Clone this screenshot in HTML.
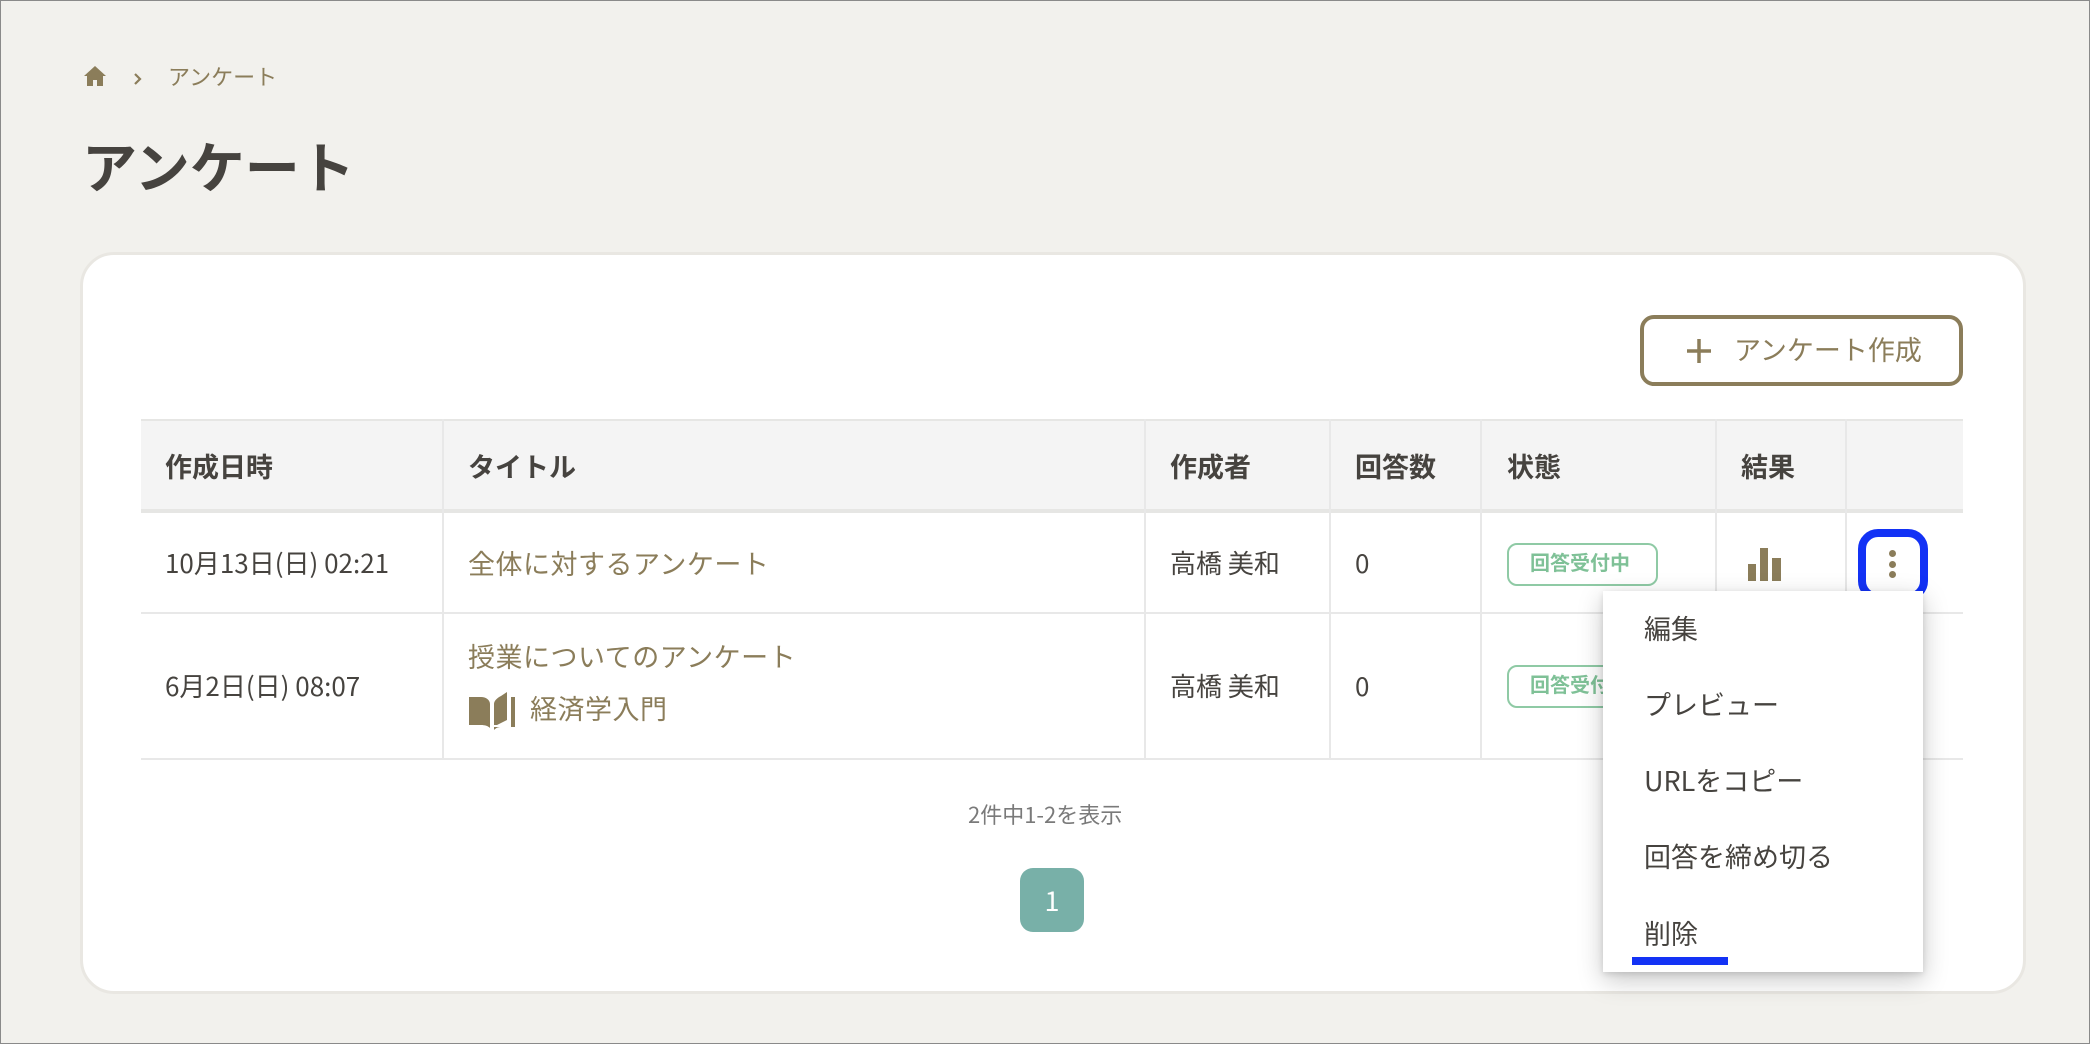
<!DOCTYPE html>
<html><head><meta charset="utf-8"><style>
*{box-sizing:border-box;margin:0;padding:0}
body{width:2090px;height:1044px;background:#f2f1ed;font-family:"Noto Sans CJK JP","Liberation Sans",sans-serif;color:#46433f;position:relative;overflow:hidden;border:1px solid #8a8a8a}
.abs{position:absolute}
.card{left:79px;top:251px;width:1946px;height:742px;background:#fff;border:3px solid #e9e7e2;border-radius:34px}
.t{position:absolute;white-space:nowrap;line-height:1}
.hline{position:absolute;left:140px;width:1822px}
.vline{position:absolute;width:2px;background:#e8e8e8}
</style></head><body>
<svg class="abs" style="left:82px;top:64px" width="24" height="22" viewBox="0 0 24 22"><path d="M12 1L1 11h3v10h6v-6h4v6h6V11h3z" fill="#8b7d5a"/></svg>
<svg class="abs" style="left:132px;top:71px" width="10" height="14" viewBox="0 0 10 14"><path d="M2 2l5 5-5 5" stroke="#8b7d5a" stroke-width="2.2" fill="none"/></svg>
<div class="t" style="left:167px;top:64px;font-size:22px;color:#8b7d5a">アンケート</div>
<div class="t" style="left:81px;top:136px;font-size:55px;font-weight:bold;color:#46433f">アンケート</div>

<div class="abs card"></div>
<div class="abs" style="left:1639px;top:314px;width:323px;height:71px;border:4px solid #8b7d5a;border-radius:14px"></div>
<svg class="abs" style="left:1684px;top:336px" width="28" height="28" viewBox="0 0 28 28"><path d="M14 2v24M2 14h24" stroke="#8b7d5a" stroke-width="3.5"/></svg>
<div class="t" style="left:1733px;top:334px;font-size:27px;color:#8b7d5a">アンケート作成</div>

<div class="abs" style="left:140px;top:418px;width:1822px;height:94px;background:#f4f4f4;border-top:2px solid #e6e6e4;border-bottom:4px solid #e6e6e4"></div>
<div class="hline" style="top:611px;height:2px;background:#e8e8e8"></div>
<div class="hline" style="top:757px;height:2px;background:#e8e8e8"></div>
<div class="vline" style="left:441px;top:418px;height:341px"></div>
<div class="vline" style="left:1143px;top:418px;height:341px"></div>
<div class="vline" style="left:1328px;top:418px;height:341px"></div>
<div class="vline" style="left:1479px;top:418px;height:341px"></div>
<div class="vline" style="left:1714px;top:418px;height:194px"></div>
<div class="vline" style="left:1844px;top:418px;height:194px"></div>

<div class="t" style="left:164px;top:451px;font-size:27px;font-weight:bold">作成日時</div>
<div class="t" style="left:467px;top:451px;font-size:27px;font-weight:bold">タイトル</div>
<div class="t" style="left:1169px;top:451px;font-size:27px;font-weight:bold">作成者</div>
<div class="t" style="left:1354px;top:451px;font-size:27px;font-weight:bold">回答数</div>
<div class="t" style="left:1506px;top:451px;font-size:27px;font-weight:bold">状態</div>
<div class="t" style="left:1740px;top:451px;font-size:27px;font-weight:bold">結果</div>

<div class="t" style="left:164px;top:549px;font-size:26px">10月13日(日) 02:21</div>
<div class="t" style="left:467px;top:548px;font-size:27px;letter-spacing:0.5px;color:#8b7d5a">全体に対するアンケート</div>
<div class="t" style="left:1169px;top:549px;font-size:26px">高橋 美和</div>
<div class="t" style="left:1354px;top:549px;font-size:26px">0</div>
<div class="abs" style="left:1506px;top:542px;width:151px;height:43px;border:2px solid #8fcaa5;border-radius:10px"></div>
<div class="t" style="left:1529px;top:551px;font-size:20px;font-weight:bold;color:#7fc197">回答受付中</div>
<svg class="abs" style="left:1747px;top:546px" width="34" height="34" viewBox="0 0 34 34"><rect x="0" y="17" width="8" height="17" fill="#8b7d5a"/><rect x="12" y="1" width="8" height="33" fill="#8b7d5a"/><rect x="24" y="11" width="9" height="23" fill="#8b7d5a"/></svg>

<div class="t" style="left:164px;top:672px;font-size:26px">6月2日(日) 08:07</div>
<div class="t" style="left:467px;top:641px;font-size:27px;letter-spacing:0.5px;color:#8b7d5a">授業についてのアンケート</div>
<svg class="abs" style="left:468px;top:688px" width="46" height="42" viewBox="0 0 46 42"><path d="M0 8h12c5 0 9 3 9 7v24c-2-2-5-3-9-3H0z" fill="#8b7d5a"/><path d="M25 15c0-3 3-6 7-8l6-4v28l-10 5H25z" fill="#8b7d5a"/><path d="M42 8h4v30H32c-3 0-5 1-7 3V38h17z" fill="#8b7d5a"/></svg>
<div class="t" style="left:529px;top:693px;font-size:27px;letter-spacing:0.5px;color:#8b7d5a">経済学入門</div>
<div class="t" style="left:1169px;top:672px;font-size:26px">高橋 美和</div>
<div class="t" style="left:1354px;top:672px;font-size:26px">0</div>
<div class="abs" style="left:1506px;top:664px;width:151px;height:43px;border:2px solid #8fcaa5;border-radius:10px"></div>
<div class="t" style="left:1529px;top:673px;font-size:20px;font-weight:bold;color:#7fc197">回答受付中</div>

<div class="t" style="left:967px;top:802px;font-size:22px;color:#7a7a7a">2件中1-2を表示</div>
<div class="abs" style="left:1019px;top:867px;width:64px;height:64px;background:#78b0a8;border-radius:13px;color:#fff;font-size:27px;text-align:center;line-height:64px">1</div>

<div class="abs" style="left:1857px;top:528px;width:70px;height:72px;border:8px solid #1332f5;border-radius:20px;background:#fff"></div>
<div class="abs" style="left:1888px;top:549px;width:7px;height:7px;border-radius:50%;background:#8b7d5a"></div>
<div class="abs" style="left:1888px;top:560px;width:7px;height:7px;border-radius:50%;background:#8b7d5a"></div>
<div class="abs" style="left:1888px;top:570px;width:7px;height:7px;border-radius:50%;background:#8b7d5a"></div>

<div class="abs" style="left:1602px;top:590px;width:320px;height:381px;background:#fff;box-shadow:0 8px 24px rgba(0,0,0,0.22),0 2px 6px rgba(0,0,0,0.12)"></div>
<div class="t" style="left:1643px;top:613px;font-size:27px">編集</div>
<div class="t" style="left:1643px;top:689px;font-size:27px">プレビュー</div>
<div class="t" style="left:1643px;top:765px;font-size:27px">URLをコピー</div>
<div class="t" style="left:1643px;top:841px;font-size:27px">回答を締め切る</div>
<div class="t" style="left:1643px;top:918px;font-size:27px">削除</div>
<div class="abs" style="left:1631px;top:956px;width:96px;height:8px;background:#1332f5"></div>
</body></html>
